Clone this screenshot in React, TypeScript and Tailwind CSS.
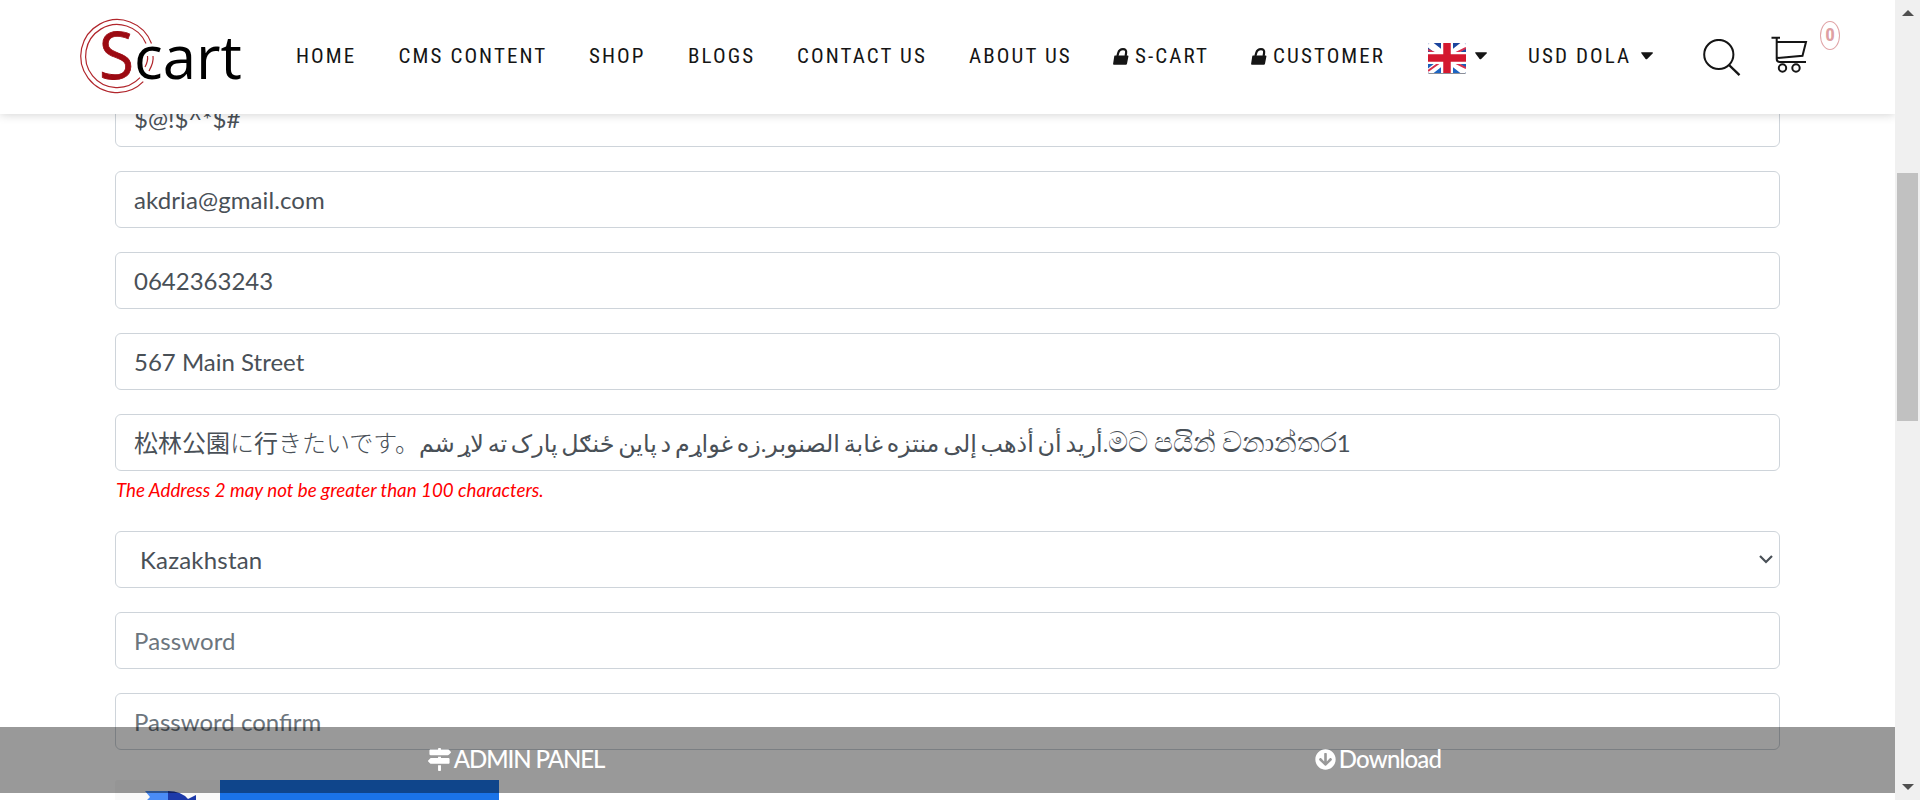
import type { ReactNode } from "react";
import { FaMapSigns, FaArrowCircleDown } from "react-icons/fa";

const bodyFont =
  "font-[Lato,'Noto_Sans','Noto_Sans_CJK_JP','DejaVu_Sans',sans-serif]";

function Field({ children, muted }: { children?: ReactNode; muted?: boolean }) {
  return (
    <div
      className={`flex h-[57px] w-full items-center rounded-[6px] border border-[#ced4da] bg-white px-[18px] text-[24px] leading-9 whitespace-nowrap ${
        muted ? "text-[#6c757d]" : "text-[#495057]"
      }`}
    >
      {children}
    </div>
  );
}

function Logo() {
  return (
    <svg width="166" height="80" viewBox="0 0 166 80" className="block overflow-visible">
      <g fill="none" stroke="#b1262c" strokeWidth="1.2">
        <path d="M71.5 27.5A36.5 36.5 0 1 0 63.3 65.7" />
        <path d="M66 27.5A31.5 31.5 0 1 0 60 61.7" />
        <path d="M67.5 40q.8 5-2.5 11M73 40q1 6-4 15" />
      </g>
      <text x="19" y="62.5" fontFamily="'Open Sans', sans-serif" fontSize="65" fontWeight="500" fill="#9c0a12" stroke="#9c0a12" strokeWidth="0.8" textLength="35" lengthAdjust="spacingAndGlyphs">S</text>
      <text x="54" y="63.2" fontFamily="'Open Sans', sans-serif" fontSize="61" fontWeight="500" fill="#000" textLength="108" lengthAdjust="spacingAndGlyphs">cart</text>
    </svg>
  );
}

function Flag() {
  return (
    <svg width="38" height="31" viewBox="0 0 38 31" className="block">
      <defs>
        <linearGradient id="blue" x1="0" y1="0" x2="0" y2="1">
          <stop offset="0" stopColor="#1c449c" />
          <stop offset="1" stopColor="#1d66c4" />
        </linearGradient>
        <clipPath id="flagClip"><rect width="38" height="30" rx="1.5" /></clipPath>
      </defs>
      <rect y="1" width="38" height="30" rx="1.5" fill="#8b8f99" />
      <g clipPath="url(#flagClip)">
        <rect width="38" height="30" fill="url(#blue)" />
        <path d="M0 0L38 30M38 0L0 30" stroke="#fff" strokeWidth="7" />
        <path d="M0 7L13 13M38 5L24 12M0 28L14 18M38 25L24 18" stroke="#d8304e" strokeWidth="2" />
        <path d="M19 0V30M0 15H38" stroke="#fff" strokeWidth="12" />
        <path d="M19 0V30M0 15H38" stroke="#d4182f" strokeWidth="7.5" />
      </g>
    </svg>
  );
}

function Lock() {
  return (
    <svg width="16" height="17" viewBox="0 0 16 17" className="mr-[6px] block shrink-0">
      <path d="M1.9 7.4H14.6Q15.6 7.4 15.4 8.4L14 15.8Q13.8 16.8 12.8 16.8H.9Q-.1 16.8.1 15.8L1.3 8Q1.4 7.4 1.9 7.4Z" fill="#151515" />
      <path d="M4.4 8L5.2 5Q6.3 1.2 10 1.2Q13.7 1.2 13.1 5L12.6 8" fill="none" stroke="#151515" strokeWidth="2.2" />
    </svg>
  );
}

function Caret() {
  return (
    <svg width="12" height="8" viewBox="0 0 12 8" className="block">
      <path d="M0 .8Q0 .3.8.3H11.4Q12.4.3 11.6 1.4L6.2 7Q5.4 7.6 4.6 7Z" fill="#151515" />
    </svg>
  );
}

function NavText({ children, width }: { children: ReactNode; width: string }) {
  return (
    <span className={`block shrink-0 pt-[2px] whitespace-nowrap ${width}`}>{children}</span>
  );
}

function Header() {
  return (
    <header className="relative z-10 flex h-[114px] w-[1895px] bg-white shadow-[0_0_10px_rgba(0,0,0,0.2)]">
      <div className="w-[296px] shrink-0 pt-4 pl-[80px]">
        <Logo />
      </div>
      <nav className="flex h-[112px] shrink-0 items-center font-[Roboto,sans-serif] text-[21px] tracking-[2.1px] text-[#151515] [font-stretch:75%]">
        <NavText width="w-[102.5px]">HOME</NavText>
        <NavText width="w-[190.5px]">CMS CONTENT</NavText>
        <NavText width="w-[99px]">SHOP</NavText>
        <NavText width="w-[109px]">BLOGS</NavText>
        <NavText width="w-[172px]">CONTACT US</NavText>
        <NavText width="w-[144px]">ABOUT US</NavText>
        <Lock />
        <NavText width="w-[116px]">S-CART</NavText>
        <Lock />
        <NavText width="w-[155px]">CUSTOMER</NavText>
        <div className="mt-1 mr-[9px] shrink-0"><Flag /></div>
        <div className="mr-[41px] shrink-0"><Caret /></div>
        <NavText width="w-[113px]">USD DOLA</NavText>
        <Caret />
      </nav>
      <div className="flex shrink-0 pt-[20px] pl-[50px]">
        <svg width="38" height="38" viewBox="0 0 38 38" fill="none" stroke="#151515" strokeWidth="2" className="mt-[19px]">
          <circle cx="15.8" cy="15.5" r="14.6" />
          <path d="M26 26L36.5 36.2" strokeWidth="2.4" />
        </svg>
        <svg width="37" height="38" viewBox="0 0 37 38" fill="none" stroke="#151515" strokeWidth="2" className="mt-[15px] ml-[30px]">
          <path d="M.5 2.8H9M5.7 2.8V24Q5.7 27 9 27H35M6 7H35L31.5 20.8L6 23" />
          <circle cx="11.5" cy="33" r="3.7" />
          <circle cx="25" cy="33" r="3.7" />
        </svg>
        <div className="mt-px ml-[12px] flex h-[29px] w-[20px] items-center justify-center rounded-[50%] border border-[#e0a4a7] font-[Roboto,sans-serif] text-[19px] font-bold text-[#dea0a3] [font-stretch:75%]">
          0
        </div>
      </div>
    </header>
  );
}

function Scrollbar() {
  return (
    <div className="relative z-20 flex h-full w-[25px] shrink-0 flex-col items-center bg-[#f0f0f0]">
      <svg width="12" height="6" viewBox="0 0 12 6" className="mt-[10px]"><path d="M0 6L6 0L12 6Z" fill="#505050" /></svg>
      <div className="mt-[157px] h-[248px] w-[21px] bg-[#c1c1c1]" />
      <svg width="12" height="6" viewBox="0 0 12 6" className="mt-auto mb-[10px]"><path d="M0 0L6 6L12 0Z" fill="#505050" /></svg>
    </div>
  );
}

export default function App() {
  return (
    <div className={`relative flex h-[800px] w-[1920px] overflow-hidden bg-white ${bodyFont}`}>
      <main className="h-full w-[1895px] shrink-0">
        <Header />
        <div className="-mt-[24px] flex w-[1780px] flex-col gap-6 pl-[115px]">
          <Field>$@!$^*$#</Field>
          <Field><span className="tracking-[0.1px]">akdria@gmail.com</span></Field>
          <Field>0642363243</Field>
          <Field>567 Main Street</Field>
          <div className="h-[93px]">
            <Field>
              <span dir="ltr">
                松林公園<span className="font-light">に</span>行<span className="font-light">きたいです。</span>
                <span className="text-[23.8px] [word-spacing:-2.3px]">أريد أن أذهب إلى منتزه غابة الصنوبر.زه غواړم د پاین ځنګل پارک ته لاړ شم</span>
                .<span className="text-[28px] leading-none [word-spacing:-1.5px]">මට පයින් වනාන්තර</span>1
              </span>
            </Field>
            <p className="mt-[4px] pl-px text-[18.75px] leading-[30px] text-[#f00] italic">
              The Address 2 may not be greater than 100 characters.
            </p>
          </div>
          <Field>
            <span className="flex-1 pl-[6px] tracking-[0.2px]">Kazakhstan</span>
            <svg width="14" height="9" viewBox="0 0 14 9" fill="none" stroke="#495057" strokeWidth="2.2" className="-mr-[12px]">
              <path d="M1 1L7 7L13 1" />
            </svg>
          </Field>
          <Field muted><span className="tracking-[0.1px]">Password</span></Field>
          <Field muted>Password confirm</Field>
        </div>
        <div className="mt-[30px] ml-[115px] flex h-[20px]">
          <div className="w-[105px] rounded-tl-[3px] bg-[#f9f9f9] pt-[10px] pl-[30px]">
            <svg width="52" height="10" viewBox="0 0 52 10" className="block">
              <path d="M0 1H23V10H2L5 7Z" fill="#4a8cf6" />
              <path d="M23 1Q36 1 43 9L51 5V10H23Z" fill="#1d3aa9" />
            </svg>
          </div>
          <div className="w-[279px] bg-[#1a73e8]" />
        </div>
      </main>
      <Scrollbar />
      <div className="absolute top-[727px] left-0 z-20 flex h-[66px] w-[1895px] items-center bg-black/40 pb-[2px] text-[24px] leading-9 font-medium text-white">
        <div className="flex flex-1 items-center justify-center gap-[3px] pl-[85px]">
          <FaMapSigns className="size-[23px]" />
          <span className="tracking-[-1.1px]">ADMIN PANEL</span>
        </div>
        <div className="flex flex-1 items-center justify-center gap-[3px] pr-[86px]">
          <FaArrowCircleDown className="size-[21px]" />
          <span className="tracking-[-0.8px]">Download</span>
        </div>
      </div>
    </div>
  );
}
